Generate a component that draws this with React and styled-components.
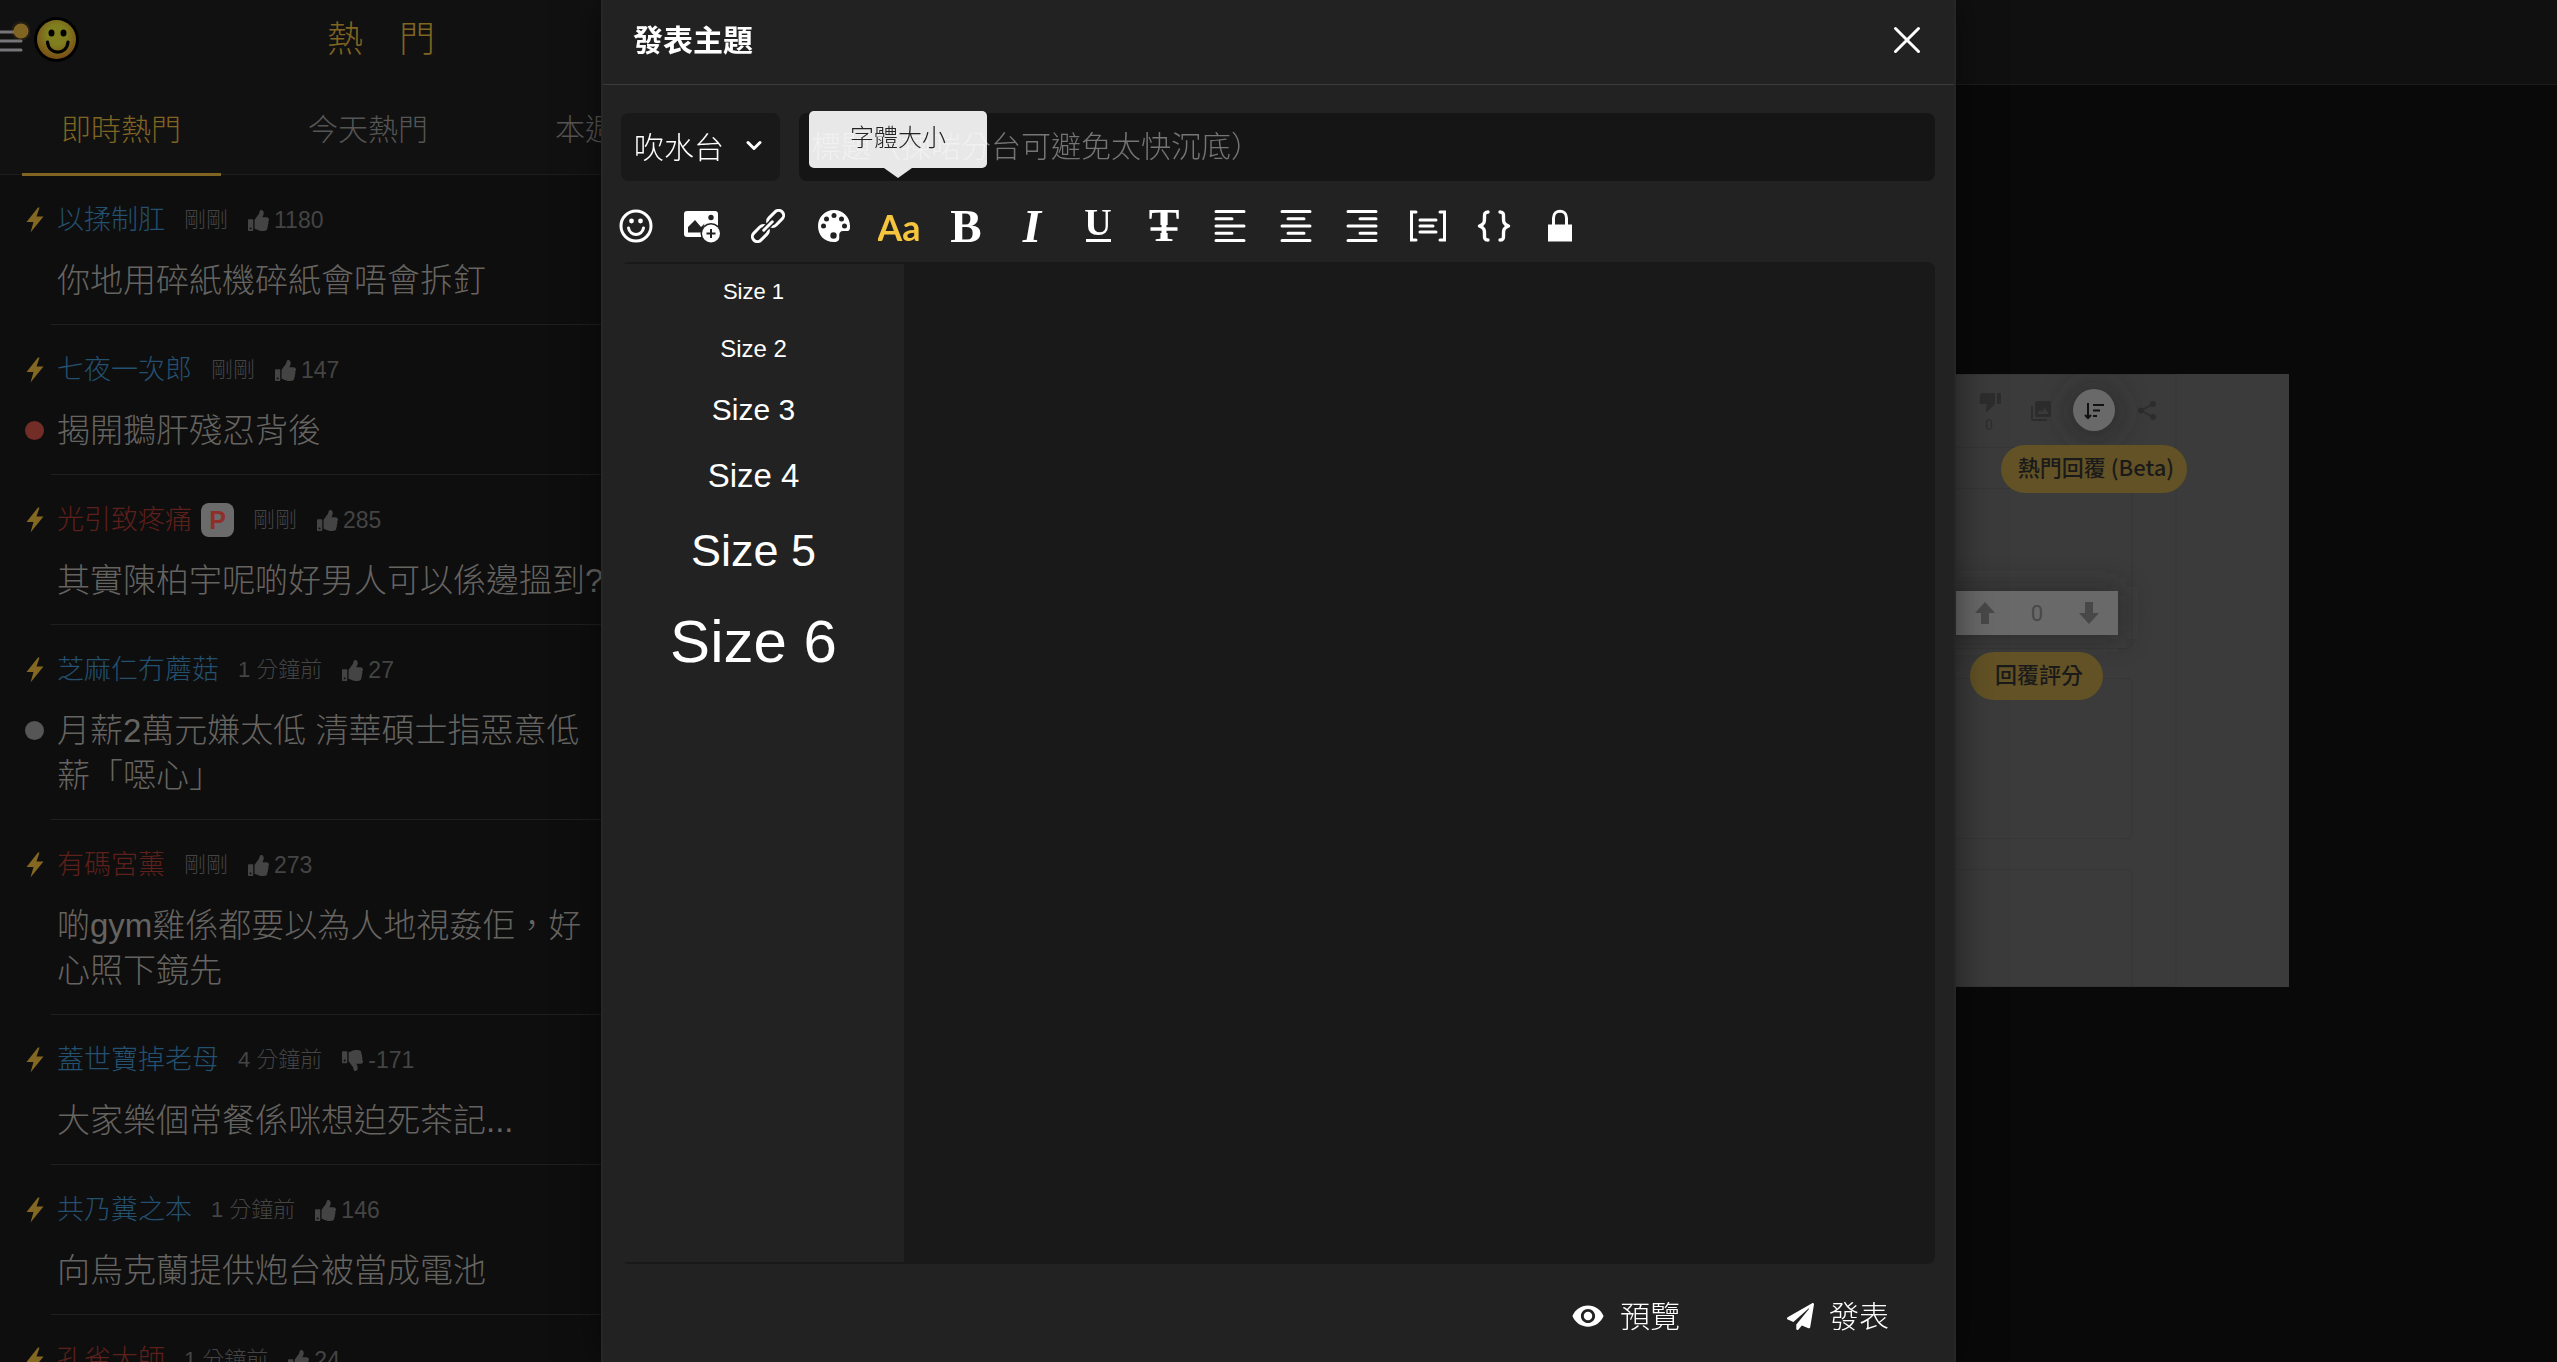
import React from 'react';
import styled, { createGlobalStyle, css } from 'styled-components';
import { FaPaperPlane, FaThumbsDown, FaThumbsUp } from 'react-icons/fa';
import { MdVisibility } from 'react-icons/md';

const gold = '#806522';

const GlobalStyle = createGlobalStyle`
  *, *::before, *::after { box-sizing: border-box; }
  body {
    margin: 0;
    background: #090909;
    overflow: hidden;
    font-family: "Liberation Sans", "Noto Sans CJK TC", sans-serif;
    font-weight: 300;
  }
  button, input, select, textarea { font: inherit; color: inherit; }
  button { padding: 0; border: 0; background: none; cursor: pointer; }
  svg { display: block; flex: none; }
`;

/* ---------- page behind the dialog ---------- */

const Page = styled.div`
  display: grid;
  grid-template-columns: 762px 1fr;
  height: 100vh;
  overflow: hidden;
`;

const Sidebar = styled.aside`
  background: #0e0e0e;
  overflow: hidden;
`;

const SideHeader = styled.header`
  background: #111;
  border-bottom: 1px solid #1d1d1d;
  height: 175px;
`;

const TopBar = styled.div`
  display: grid;
  grid-template-columns: 1fr auto 1fr;
  align-items: center;
  height: 79px;
`;

const Brand = styled.div`
  display: flex;
  align-items: center;
  gap: 4px;
`;

const PageTitle = styled.h1`
  margin: 0;
  font-size: 36px;
  line-height: 54px;
  font-weight: 300;
  color: ${gold};
`;

const Tabs = styled.nav`
  display: flex;
  gap: 48px;
  height: 97px;
  padding-left: 22px;
`;

const Tab = styled.a`
  flex: none;
  padding: 28px 40px 0 39px;
  font-size: 30px;
  line-height: 45px;
  text-decoration: none;
  color: ${(p) => (p.$active ? gold : '#555')};
  border-bottom: 3px solid ${(p) => (p.$active ? gold : 'transparent')};
`;

const ThreadList = styled.ul`
  margin: 0;
  padding: 0;
  list-style: none;
`;

const Thread = styled.li`
  margin-left: 51px;
  padding: 27px 154px 21px 0;
  border-bottom: 1px solid #1f1f1f;
`;

const Meta = styled.div`
  display: flex;
  align-items: center;
  height: 36px;
  margin-left: -25px;
`;

const Author = styled.a`
  margin-left: 13px;
  font-size: 27px;
  line-height: 36px;
  text-decoration: none;
  color: ${(p) => (p.$tone === 'red' ? '#5e201b' : '#24516f')};
`;

const Badge = styled.span`
  width: 33px;
  height: 34px;
  margin-left: 9px;
  border-radius: 8px;
  background: #6b6b6b;
  color: #8e3029;
  font-size: 25px;
  line-height: 34px;
  font-weight: 700;
  text-align: center;
`;

const Time = styled.time`
  margin-left: 19px;
  font-size: 22px;
  line-height: 36px;
  color: #444;
`;

const Votes = styled.span`
  display: flex;
  align-items: center;
  gap: 5px;
  margin-left: 20px;
  font-size: 23px;
  line-height: 36px;
  color: #444;
`;

const TitleRow = styled.div`
  display: flex;
  margin: 20px 0 0 -26px;
`;

const Dot = styled.span`
  flex: none;
  width: 19px;
  height: 19px;
  margin-top: 13px;
  border-radius: 50%;
  background: ${(p) => p.$color};
`;

const Title = styled.a`
  margin-left: 13px;
  font-size: 33px;
  line-height: 45px;
  text-decoration: none;
  color: #666461;
`;

const Main = styled.main`
  display: flex;
  flex-direction: column;
  min-width: 0;
`;

const MainBar = styled.div`
  flex: none;
  height: 85px;
  background: #101010;
  border-bottom: 1px solid #1d1d1d;
`;

const Stage = styled.div`
  flex: 1;
  display: flex;
  align-items: center;
  justify-content: center;
  padding-bottom: 86px;
`;

/* ---------- dialog ---------- */

const Overlay = styled.div`
  position: fixed;
  inset: 0;
  display: flex;
  justify-content: center;
`;

const Dialog = styled.form`
  display: flex;
  flex-direction: column;
  width: 1355px;
  max-width: 100%;
  height: 100%;
  border: solid #262626;
  border-width: 0 2px;
  background: #222;
  color: #fff;
  box-shadow: 0 0 36px rgba(0, 0, 0, 0.5);
`;

const DialogHeader = styled.header`
  flex: none;
  display: flex;
  align-items: center;
  justify-content: space-between;
  height: 85px;
  padding: 0 30px 4px;
  border-bottom: 1px solid #3b3b3b;
`;

const DialogTitle = styled.h2`
  margin: 0;
  font-size: 30px;
  line-height: 45px;
  font-weight: 700;
`;

const Fields = styled.div`
  display: flex;
  gap: 19px;
  padding: 28px 19px 0 18px;
`;

const SelectBox = styled.label`
  position: relative;
  flex: none;
  width: 159px;
  svg {
    position: absolute;
    right: 18px;
    top: 27px;
    pointer-events: none;
  }
`;

const field = css`
  height: 68px;
  border: 0;
  border-radius: 8px;
  outline: 0;
  font-size: 30px;
`;

const Select = styled.select`
  ${field}
  width: 100%;
  padding: 0 13px;
  appearance: none;
  background: #191919;
`;

const SubjectInput = styled.input`
  ${field}
  flex: 1;
  min-width: 0;
  padding: 0 12px;
  background: #151515;
  &::placeholder { color: #757575; opacity: 1; }
`;

const Toolbar = styled.div`
  flex: none;
  display: flex;
  padding: 14px 0 5px;
`;

const Tool = styled.button`
  position: relative;
  display: flex;
  align-items: center;
  justify-content: center;
  width: 66px;
  height: 62px;
  color: ${(p) => (p.$active ? '#f5c53d' : '#fff')};
`;

const Tooltip = styled.span`
  position: absolute;
  left: 50%;
  bottom: calc(100% + 27px);
  width: 178px;
  margin-left: -91px;
  padding-bottom: 4px;
  border-radius: 5px;
  background: rgba(255, 255, 255, 0.9);
  color: #222;
  font-size: 24px;
  line-height: 53px;
  text-align: center;
  &::after {
    content: '';
    position: absolute;
    top: 100%;
    left: 50%;
    margin-left: -14px;
    border: 14px solid transparent;
    border-top: 10px solid rgba(255, 255, 255, 0.9);
    border-bottom: 0;
  }
`;

const EditorArea = styled.div`
  flex: 1;
  display: flex;
  position: relative;
  min-height: 0;
  margin: 0 19px 0 18px;
`;

const Editor = styled.textarea`
  flex: 1;
  border: 0;
  border-radius: 8px;
  outline: 0;
  resize: none;
  background: #191919;
`;

const SizePanel = styled.div`
  position: absolute;
  left: -18px;
  top: 2px;
  bottom: 2px;
  width: 301px;
  display: flex;
  flex-direction: column;
  background: #222;
`;

const SizeOption = styled.button`
  padding: 15px 0;
  font-size: ${(p) => p.$size}px;
  line-height: normal;
  font-weight: 400;
`;

const DialogFooter = styled.footer`
  flex: none;
  display: flex;
  align-items: center;
  justify-content: flex-end;
  gap: 107px;
  height: 98px;
  padding: 6px 65px 0 0;
`;

const Action = styled.button`
  display: flex;
  align-items: center;
  gap: 15px;
  font-size: 30px;
  line-height: 45px;
`;

/* ---------- icons ---------- */

const Svg = ({ size = 34, children, ...rest }) => (
  <svg width={size} height={size} viewBox="0 0 34 34" fill="none" stroke="currentColor" strokeLinecap="round" strokeWidth="3" aria-hidden="true" {...rest}>
    {children}
  </svg>
);

const HamburgerIcon = () => (
  <svg width="30" height="45" viewBox="0 0 30 45" aria-hidden="true">
    <path d="M0 15h21M0 24h21M0 33h21" stroke="#77757a" strokeWidth="3" strokeLinecap="round" />
    <circle cx="21" cy="14" r="10" fill="#806522" opacity="0.15" />
    <circle cx="21" cy="14" r="7.6" fill="#806522" />
  </svg>
);

const FaceLogo = () => (
  <svg width="45" height="45" viewBox="0 0 45 45" aria-hidden="true">
    <defs>
      <radialGradient id="face" cx="50%" cy="38%" r="62%">
        <stop offset="0.4" stopColor="#7f7f20" />
        <stop offset="1" stopColor="#7a4d14" />
      </radialGradient>
    </defs>
    <circle cx="22.500" cy="22.500" r="22.500" fill="#000" />
    <circle cx="22.500" cy="22.500" r="19.500" fill="url(#face)" />
    <ellipse cx="17.500" cy="16" rx="3" ry="3.600" fill="#000" />
    <ellipse cx="29.500" cy="16" rx="3" ry="3.600" fill="#000" />
    <path d="M13.500 25c1 13.500 19.500 13.500 20.500 0" fill="none" stroke="#000" strokeWidth="3.200" strokeLinecap="round" />
  </svg>
);

const BoltIcon = () => (
  <svg width="18" height="26" viewBox="0 0 18 26" aria-hidden="true">
    <path d="M12 .5 .5 15h7L4.500 25.500 17.500 9.500h-7L13.500.5z" fill="#846821" />
  </svg>
);

const SmileyIcon = () => (
  <Svg>
    <circle cx="17" cy="17" r="15" />
    <circle cx="12.500" cy="12" r="2.400" fill="currentColor" stroke="none" />
    <circle cx="21.500" cy="12" r="2.400" fill="currentColor" stroke="none" />
    <path d="M9.500 19c1.500 8.500 13.500 8.500 15 0" />
  </Svg>
);

const ImageAddIcon = () => (
  <svg width="36" height="34" viewBox="0 0 36 34" aria-hidden="true">
    <path fill="#fff" fillRule="evenodd" d="M3 2h28a3 3 0 0 1 3 3v20a3 3 0 0 1-3 3H3a3 3 0 0 1-3-3V5a3 3 0 0 1 3-3zM4 23.500h13.500l3-9-3.500 3.500-6-7L4 18zM27 5.800a2.700 2.700 0 1 0 0 5.400 2.700 2.700 0 0 0 0-5.400z" />
    <circle cx="27" cy="24.500" r="10.500" fill="#222" />
    <circle cx="27" cy="24.500" r="9" fill="#fff" />
    <path d="M27 20v9M22.500 24.500h9" stroke="#222" strokeWidth="2" />
  </svg>
);

const LinkIcon = () => (
  <Svg>
    <g transform="rotate(-45 17 17)">
      <rect x="-3" y="12" width="18.500" height="10" rx="5" />
      <rect x="18.500" y="12" width="18.500" height="10" rx="5" />
      <path d="M12.500 17h9" stroke="#222" strokeWidth="6" strokeLinecap="butt" />
      <path d="M11 17h12" />
    </g>
  </Svg>
);

const PaletteIcon = () => (
  <Svg>
    <path fill="currentColor" stroke="none" d="M17 1C8 1 1 8 1 17s6 16 16 16c5 0 5.500-2.500 5.200-6-.3-3 1-5 4-5H31c2-.3 2-3 2-5C33 8 26 1 17 1z" />
    <g fill="#222" stroke="none">
      <circle cx="17" cy="6.500" r="2.500" />
      <circle cx="9.500" cy="10" r="2.500" />
      <circle cx="24.500" cy="10" r="2.500" />
      <circle cx="6.500" cy="17" r="2.500" />
      <circle cx="27.500" cy="17" r="2.500" />
      <circle cx="16.500" cy="26.500" r="3.200" />
    </g>
  </Svg>
);

const FontSizeIcon = () => (
  <svg width="44" height="34" viewBox="0 0 44 34" aria-hidden="true">
    <text x="21" y="32" textAnchor="middle" fill="currentColor" fontFamily="Lato, sans-serif" fontWeight="700" fontSize="36">Aa</text>
  </svg>
);

const SerifIcon = ({ letter, size = 47, base = 33, italic, children }) => (
  <svg width="36" height="34" viewBox="0 0 36 34" aria-hidden="true">
    <text x="18" y={base} textAnchor="middle" fill="currentColor" fontFamily="'Liberation Serif', serif" fontWeight="700" fontStyle={italic ? 'italic' : 'normal'} fontSize={size}>{letter}</text>
    {children}
  </svg>
);

const UnderlineIcon = () => (
  <SerifIcon letter="U" size={38} base={26}>
    <path d="M6 31.500h25" stroke="currentColor" strokeWidth="3" />
  </SerifIcon>
);

const StrikeIcon = () => (
  <SerifIcon letter="T" size={46} base={32}>
    <path d="M2 20h32" stroke="#222" strokeWidth="8" />
    <path d="M4.500 20h27" stroke="currentColor" strokeWidth="3.500" />
    <path d="M18 14v12" stroke="currentColor" strokeWidth="5" />
  </SerifIcon>
);

const AlignIcon = ({ at }) => (
  <Svg>
    <path d={`M3 2.500h28M${at} 9.800h16M3 17h28M${at} 24.200h16M3 31.500h28`} />
  </Svg>
);

const BracketIcon = () => (
  <svg width="38" height="34" viewBox="0 0 38 34" fill="none" stroke="currentColor" strokeWidth="3" strokeLinecap="round" aria-hidden="true">
    <path d="M7 3H2.500v28H7M31 3h4.500v28H31M11 11h16M11 17h13M11 23h16" />
  </svg>
);

const BracesIcon = () => (
  <Svg strokeWidth="3.400" strokeLinejoin="round">
    <path d="M11 3C7 3 7.500 6 7.500 9c0 4 0 6-5 8 5 2 5 4 5 8 0 3-.5 6 3.500 6M23 3c4 0 3.500 3 3.500 6 0 4 0 6 5 8-5 2-5 4-5 8 0 3 .5 6-3.500 6" />
  </Svg>
);

const LockIcon = () => (
  <Svg>
    <path d="M10.500 17V9c0-9 13-9 13 0v8" />
    <path d="M5 15.500h24v17H5z" fill="currentColor" stroke="none" />
  </Svg>
);

const ChevronIcon = () => (
  <svg width="16" height="12" viewBox="0 0 16 12" fill="none" stroke="#fff" strokeWidth="3" strokeLinecap="round" strokeLinejoin="round" aria-hidden="true">
    <path d="M2 2.500l6 6 6-6" />
  </svg>
);

const CloseIcon = () => (
  <svg width="34" height="34" viewBox="0 0 34 34" stroke="#fff" strokeWidth="3" strokeLinecap="round" aria-hidden="true">
    <path d="M5.500 5.500l23 23M28.500 5.500l-23 23" />
  </svg>
);

/* Announcement picture: two call-outs over a faint post layout */
const Announcement = () => (
  <svg width="1259" height="613" viewBox="0 0 1259 613" role="img" aria-label="熱門回覆 (Beta) 回覆評分">
    <defs>
      <filter id="glow" x="-100%" y="-100%" width="300%" height="300%">
        <feGaussianBlur stdDeviation="14" />
      </filter>
    </defs>
    <rect width="1259" height="613" fill="#3b3b3b" />
    <g fill="none" stroke="#363636">
      <path d="M100 .5h1046v612H100M100 73.500h1046M100 114.500h997a5 5 0 0 1 5 5v150a5 5 0 0 1-5 5H100" />
      <path d="M100 304.500h997a5 5 0 0 1 5 5v150a5 5 0 0 1-5 5H100M100 495.500h997a5 5 0 0 1 5 5v112" />
    </g>
    <g fill="#2d2d2d">
      <path d="M951 19h14v11l-8 8c-2-1-1-3 0-8h-7c-1-4 0-8 1-11zM967 19h4v11h-4z" />
      <path fillRule="evenodd" d="M1008 27h11a2 2 0 0 1 2 2v12a2 2 0 0 1-2 2h-12a2 2 0 0 1-2-2V29a2 2 0 0 1 2-2zm-1 13h12l-4-6-3 4-2-2z" />
      <path d="M1003 32v13h14v2h-14a2 2 0 0 1-2-2V32z" />
      <circle cx="1123" cy="30" r="3" />
      <circle cx="1111" cy="36.500" r="3" />
      <circle cx="1123" cy="43" r="3" />
      <path d="M1123 30l-12 6.500 12 6.500" fill="none" stroke="#2d2d2d" strokeWidth="1.500" />
    </g>
    <text x="959" y="56" fontSize="14" fontWeight="400" fill="#2d2d2d" textAnchor="middle" fontFamily="Roboto, sans-serif">0</text>
    <circle cx="1064" cy="38" r="28" fill="#222" filter="url(#glow)" opacity="0.5" />
    <circle cx="1064" cy="36" r="21" fill="#696969" />
    <path d="M1058 29v15M1063 31h11M1063 36.500h7M1063 42h4M1055 41l3 3 3-3" fill="none" stroke="#111" strokeWidth="2" />
    <rect x="971" y="71" width="186" height="48" rx="24" fill="#625225" />
    <text x="1066" y="102" fontSize="22" fontWeight="500" fill="#1a1a1a" textAnchor="middle" fontFamily="'Noto Sans CJK TC', sans-serif">熱門回覆 (Beta)</text>
    <rect x="880" y="213" width="212" height="52" fill="#222" filter="url(#glow)" opacity="0.5" />
    <rect x="880" y="217" width="208" height="44" fill="#696969" />
    <path d="M955 228l10 11h-6v11h-8v-11h-6zM1059 250l-10-11h6v-11h8v11h6z" fill="#484848" />
    <text x="1007" y="247" fontSize="22" fontWeight="400" fill="#484848" textAnchor="middle" fontFamily="Roboto, sans-serif">0</text>
    <rect x="940" y="278" width="133" height="48" rx="24" fill="#625225" />
    <text x="1009" y="309" fontSize="22" fontWeight="500" fill="#1a1a1a" textAnchor="middle" fontFamily="'Noto Sans CJK TC', sans-serif">回覆評分</text>
  </svg>
);

/* ---------- data ---------- */

const threads = [
  { author: '以揉制肛', time: '剛剛', votes: 1180, title: '你地用碎紙機碎紙會唔會拆釘' },
  { author: '七夜一次郎', time: '剛剛', votes: 147, dot: '#712d26', title: '揭開鵝肝殘忍背後' },
  { author: '光引致疼痛', tone: 'red', plus: true, time: '剛剛', votes: 285, title: '其實陳柏宇呢啲好男人可以係邊搵到?' },
  { author: '芝麻仁冇蘑菇', time: '1 分鐘前', votes: 27, dot: '#565656', title: '月薪2萬元嫌太低 清華碩士指惡意低薪「噁心」' },
  { author: '有碼宮薰', tone: 'red', time: '剛剛', votes: 273, title: '啲gym雞係都要以為人地視姦佢，好心照下鏡先' },
  { author: '蓋世寶掉老母', time: '4 分鐘前', votes: -171, title: '大家樂個常餐係咪想迫死茶記...' },
  { author: '共乃糞之本', time: '1 分鐘前', votes: 146, title: '向烏克蘭提供炮台被當成電池' },
  { author: '孔雀大師', tone: 'red', time: '1 分鐘前', votes: 24, title: '' },
];

const tools = [
  { label: '表情', icon: <SmileyIcon /> },
  { label: '圖片', icon: <ImageAddIcon /> },
  { label: '連結', icon: <LinkIcon /> },
  { label: '顏色', icon: <PaletteIcon /> },
  { label: '字體大小', icon: <FontSizeIcon />, active: true },
  { label: '粗體', icon: <SerifIcon letter="B" /> },
  { label: '斜體', icon: <SerifIcon letter="I" italic /> },
  { label: '底線', icon: <UnderlineIcon /> },
  { label: '刪除線', icon: <StrikeIcon /> },
  { label: '靠左', icon: <AlignIcon at={3} /> },
  { label: '置中', icon: <AlignIcon at={9} /> },
  { label: '靠右', icon: <AlignIcon at={15} /> },
  { label: '引用', icon: <BracketIcon /> },
  { label: '程式碼', icon: <BracesIcon /> },
  { label: '隱藏', icon: <LockIcon /> },
];

const sizes = [22, 24, 30, 33, 45, 60];

const ThreadItem = ({ thread }) => {
  const Thumb = thread.votes < 0 ? FaThumbsDown : FaThumbsUp;
  return (
    <Thread>
      <Meta>
        <BoltIcon />
        <Author href="#" $tone={thread.tone}>{thread.author}</Author>
        {thread.plus && <Badge>P</Badge>}
        <Time>{thread.time}</Time>
        <Votes>
          <Thumb size={21} />
          {thread.votes}
        </Votes>
      </Meta>
      <TitleRow>
        <Dot $color={thread.dot || 'transparent'} />
        <Title href="#">{thread.title}</Title>
      </TitleRow>
    </Thread>
  );
};

export default function App() {
  return (
    <>
      <GlobalStyle />
      <Page>
        <Sidebar>
          <SideHeader>
            <TopBar>
              <Brand>
                <HamburgerIcon />
                <FaceLogo />
              </Brand>
              <PageTitle>熱　門</PageTitle>
            </TopBar>
            <Tabs>
              <Tab href="#" $active>即時熱門</Tab>
              <Tab href="#">今天熱門</Tab>
              <Tab href="#">本週熱門</Tab>
            </Tabs>
          </SideHeader>
          <ThreadList>
            {threads.map((t) => <ThreadItem key={t.author} thread={t} />)}
          </ThreadList>
        </Sidebar>
        <Main>
          <MainBar />
          <Stage>
            <Announcement />
          </Stage>
        </Main>
      </Page>
      <Overlay>
        <Dialog role="dialog" aria-label="發表主題" onSubmit={(e) => e.preventDefault()}>
          <DialogHeader>
            <DialogTitle>發表主題</DialogTitle>
            <button type="button" aria-label="關閉"><CloseIcon /></button>
          </DialogHeader>
          <Fields>
            <SelectBox>
              <Select aria-label="分台"><option>吹水台</option></Select>
              <ChevronIcon />
            </SelectBox>
            <SubjectInput aria-label="標題" placeholder="標題（揀啱分台可避免太快沉底）" />
          </Fields>
          <Toolbar>
            {tools.map((t) => (
              <Tool key={t.label} type="button" aria-label={t.label} $active={t.active}>
                {t.icon}
                {t.active && <Tooltip role="tooltip">{t.label}</Tooltip>}
              </Tool>
            ))}
          </Toolbar>
          <EditorArea>
            <Editor aria-label="內容" />
            <SizePanel>
              {sizes.map((s, i) => <SizeOption key={s} type="button" $size={s}>Size {i + 1}</SizeOption>)}
            </SizePanel>
          </EditorArea>
          <DialogFooter>
            <Action type="button"><MdVisibility size={34} />預覽</Action>
            <Action type="submit"><FaPaperPlane size={27} />發表</Action>
          </DialogFooter>
        </Dialog>
      </Overlay>
    </>
  );
}
